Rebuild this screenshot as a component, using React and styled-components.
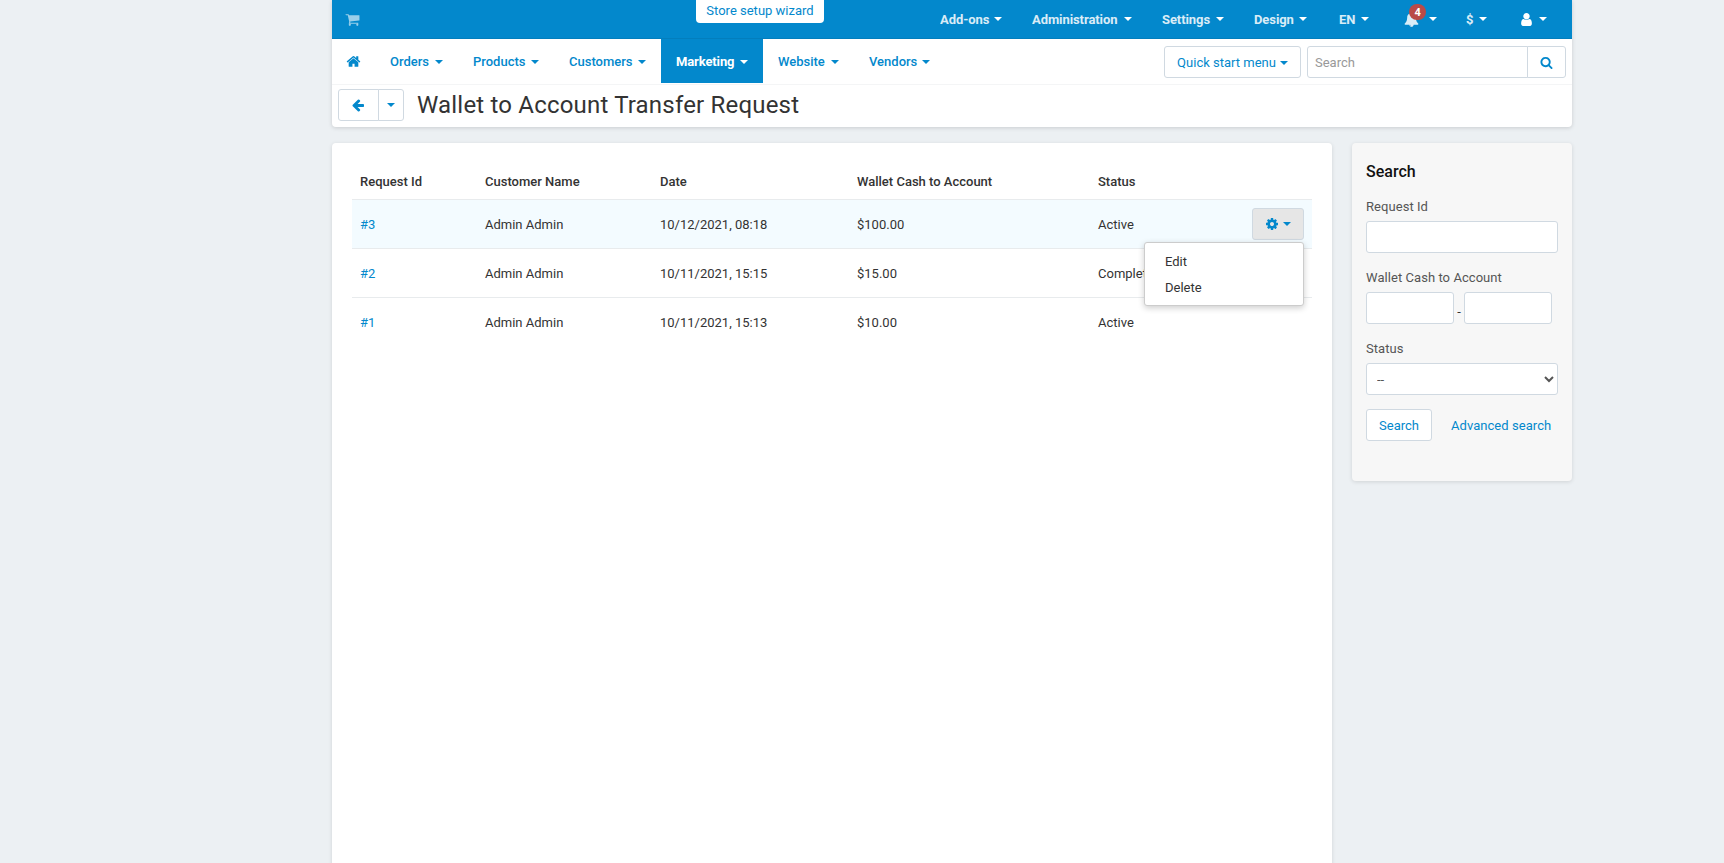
import * as React from "react"
import styled, { createGlobalStyle, css } from "styled-components"

const GlobalStyle = createGlobalStyle`
  * {
    box-sizing: border-box;
  }

  body {
    margin: 0;
    height: 863px;
    overflow: hidden;
    background: #ecf0f3;
    color: #333;
    font: 13px/20px Roboto, "Liberation Sans", sans-serif;
  }

  a {
    color: #0388cc;
    text-decoration: none;
  }
`

const blue = "#0388cc"
const border = "#d0d9e1"

const paths = {
  cart: "M704 1536q0 52-38 90t-90 38-90-38-38-90 38-90 90-38 90 38 38 90zm896 0q0 52-38 90t-90 38-90-38-38-90 38-90 90-38 90 38 38 90zm128-1088v512q0 24-16.5 42.5t-40.5 21.5l-1044 122q13 60 13 70 0 16-24 64h920q26 0 45 19t19 45-19 45-45 19h-1024q-26 0-45-19t-19-45q0-11 8-31.5t16-36 21.5-40 15.5-29.5l-177-823h-204q-26 0-45-19t-19-45 19-45 45-19h256q16 0 28.5 6.5t19.5 15.5 13 24.5 8 26 5.5 29.5 4.5 26h1201q26 0 45 19t19 45z",
  home: "M1472 992v480q0 26-19 45t-45 19h-384v-384h-256v384h-384q-26 0-45-19t-19-45v-480q0-1 .5-3t.5-3l575-474 575 474q1 2 1 6zm223-69l-62 74q-8 9-21 11h-3q-13 0-21-7l-692-577-692 577q-12 8-24 7-13-2-21-11l-62-74q-8-10-7-23.5t11-21.5l719-599q32-26 76-26t76 26l244 204v-195q0-14 9-23t23-9h192q14 0 23 9t9 23v408l219 182q10 8 11 21.5t-7 23.5z",
  back: "M1664 896v128q0 53-32.5 90.5t-84.5 37.5h-704l293 294q38 36 38 90t-38 90l-75 76q-37 37-90 37-52 0-91-37l-651-652q-37-37-37-90 0-52 37-91l651-650q38-38 91-38 52 0 90 38l75 74q38 38 38 91t-38 91l-293 293h704q52 0 84.5 37.5t32.5 90.5z",
  search: "M1216 832q0-185-131.5-316.5t-316.5-131.5-316.5 131.5-131.5 316.5 131.5 316.5 316.5 131.5 316.5-131.5 131.5-316.5zm512 832q0 52-38 90t-90 38q-54 0-90-38l-343-342q-179 124-399 124-143 0-273.5-55.5t-225-150-150-225-55.5-273.5 55.5-273.5 150-225 225-150 273.5-55.5 273.5 55.5 225 150 150 225 55.5 273.5q0 220-124 399l343 343q37 37 37 90z",
  user: "M1536 1399q0 109-62.5 187t-150.5 78h-854q-88 0-150.5-78t-62.5-187q0-85 8.5-160.5t31.5-152 58.5-131 94-89 134.5-34.5q131 128 313 128t313-128q76 0 134.5 34.5t94 89 58.5 131 31.5 152 8.5 160.5zm-256-887q0 159-112.5 271.5t-271.5 112.5-271.5-112.5-112.5-271.5 112.5-271.5 271.5-112.5 271.5 112.5 112.5 271.5z",
  bell: "M912 1696q0-16-16-16-59 0-101.5-42.5t-42.5-101.5q0-16-16-16t-16 16q0 73 51.5 124.5t124.5 51.5q16 0 16-16zm816-288q0 52-38 90t-90 38h-448q0 106-75 181t-181 75-181-75-75-181h-448q-52 0-90-38t-38-90q50-42 91-88t85-119.5 74.5-158.5 50-206 19.5-260q0-152 117-282.5t307-158.5q-8-19-8-39 0-40 28-68t68-28 68 28 28 68q0 20-8 39 190 28 307 158.5t117 282.5q0 139 19.5 260t50 206 74.5 158.5 85 119.5 91 88z",
  cog: "M1152 896q0-106-75-181t-181-75-181 75-75 181 75 181 181 75 181-75 75-181zm512-109v222q0 12-8 23t-20 13l-185 28q-19 54-39 91 35 50 107 138 10 12 10 25t-9 23q-27 37-99 108t-94 71q-12 0-26-9l-138-108q-44 23-91 38-16 136-29 186-7 28-36 28h-222q-14 0-24.5-8.5t-11.5-21.5l-28-184q-49-16-90-37l-141 107q-10 9-25 9-14 0-25-11-126-114-165-168-7-10-7-23 0-12 8-23 15-21 51-66.5t54-70.5q-27-50-41-99l-183-27q-13-2-21-12.5t-8-23.5v-222q0-12 8-23t19-13l186-28q14-46 39-92-40-57-107-138-10-12-10-24 0-10 9-23 26-36 98.5-107.5t94.5-71.5q13 0 26 10l138 107q44-23 91-38 16-136 29-186 7-28 36-28h222q14 0 24.5 8.5t11.5 21.5l28 184q49 16 90 37l142-107q9-9 24-9 13 0 25 10 129 119 165 170 7 8 7 22 0 12-8 23-15 21-51 66.5t-54 70.5q26 50 41 98l183 28q13 2 21 12.5t8 23.5z",
}

const Svg = styled.svg`
  display: block;
  flex: none;
  fill: currentColor;
`

const Icon = ({ name, size = 14, ...rest }) => (
  <Svg width={size} height={size} viewBox="0 0 1792 1792" {...rest}>
    <path d={paths[name]} />
  </Svg>
)

const Caret = styled.span`
  flex: none;
  border-top: 4px solid currentColor;
  border-left: 4px solid transparent;
  border-right: 4px solid transparent;
`

const Page = styled.div`
  width: 1240px;
  margin-left: 332px;
`

const HeaderWrapper = styled.header`
  height: 127px;
  background: #fff;
  border-radius: 0 0 4px 4px;
  box-shadow: 0 1px 4px rgba(0, 0, 0, 0.15);
`

const TopBar = styled.div`
  display: flex;
  align-items: center;
  height: 39px;
  padding: 0 10px 0 13px;
  background: ${blue};
  border-bottom: 1px solid #037ebd;
  color: #fff;
`

const CartIcon = styled(Icon)`
  opacity: 0.6;
`

const WizardLink = styled.a`
  align-self: flex-start;
  width: 128px;
  height: 23px;
  margin-left: 336px;
  background: #fff;
  border-radius: 0 0 4px 4px;
  line-height: 21px;
  text-align: center;
`

const TopMenu = styled.nav`
  display: flex;
  margin-left: auto;
`

const TopItem = styled.div`
  display: flex;
  align-items: center;
  justify-content: space-between;
  width: ${p => p.$width}px;
  margin-left: ${p => p.$gap || 0}px;
  padding: 0 15px;
  font-weight: 700;
  letter-spacing: -0.08px;

  > :first-child {
    margin-top: ${p => (p.$icon ? 0 : 2)}px;
    opacity: ${p => (p.$icon ? 1 : 0.85)};
  }
`

const BellWrapper = styled.span`
  position: relative;
`

const Badge = styled.span`
  position: absolute;
  top: -8px;
  left: 5px;
  width: 17px;
  height: 16px;
  background: #b94a48;
  border-radius: 8px;
  font-size: 11px;
  line-height: 17px;
  text-align: center;
`

const NavBar = styled.div`
  display: flex;
  height: 46px;
  padding-right: 6px;
  border-bottom: 1px solid #f4f5f6;
`

const HomeLink = styled.a`
  display: flex;
  width: 43px;
  padding: 15px 0 0 14px;
`

const NavItem = styled.a`
  display: flex;
  align-items: center;
  justify-content: space-between;
  width: ${p => p.$width}px;
  height: 44px;
  padding: 2px 15px 0;
  font-weight: 500;

  ${p => p.$active && css`
    background: ${blue};
    color: #fff;
    font-weight: 700;
    letter-spacing: -0.12px;
  `}
`

const NavTools = styled.div`
  display: flex;
  gap: 6px;
  margin: 7px 0 0 auto;
`

const Button = styled.a`
  display: flex;
  align-items: center;
  justify-content: center;
  gap: 4px;
  width: ${p => p.$width}px;
  height: 32px;
  background: ${p => (p.$pressed ? "#e6e6e6" : "#fff")};
  border: 1px solid ${border};
  border-radius: 3px;
  color: ${blue};
`

const TextButton = styled(Button)`
  padding-top: 2px;
`

const ButtonGroup = styled.div`
  display: flex;

  > * + * {
    margin-left: -1px;
    border-top-left-radius: 0;
    border-bottom-left-radius: 0;
  }

  > :first-child {
    border-top-right-radius: 0;
    border-bottom-right-radius: 0;
  }
`

const Input = styled.input`
  width: ${p => p.$width}px;
  height: 32px;
  padding: 5px 7px 4px;
  background: #fff;
  border: 1px solid ${border};
  border-radius: 3px;
  font: inherit;

  &::placeholder {
    color: #999;
  }
`

const TitleBar = styled.div`
  display: flex;
  align-items: center;
  height: 40px;
  padding-left: 6px;
`

const BackButton = styled(Button)`
  padding-right: 2px;
`

const Title = styled.h1`
  margin: 0 0 0 13px;
  font-size: 24px;
  font-weight: 400;
  line-height: 32px;
  letter-spacing: 0.19px;
`

const Columns = styled.div`
  display: flex;
  align-items: flex-start;
  gap: 20px;
  margin-top: 16px;
`

const Panel = styled.main`
  width: 1000px;
  height: 740px;
  padding: 20px;
  background: #fff;
  border-radius: 4px;
  box-shadow: 0 1px 4px rgba(0, 0, 0, 0.12);
`

const Row = styled.div`
  display: grid;
  grid-template-columns: 125px 175px 197px 241px 1fr auto;
  align-items: center;
  height: ${p => (p.$head ? 37 : 49)}px;
  padding: 0 8px;
  background: ${p => (p.$hover ? "#f3fbff" : "transparent")};
  border-bottom: 1px solid ${p => (p.$last ? "transparent" : "#e8ebed")};
  font-weight: ${p => (p.$head ? 500 : 400)};
`

const Cell = styled.span`
  padding-top: 2px;
`

const Tools = styled.div`
  position: relative;
`

const Menu = styled.div`
  position: absolute;
  top: 34px;
  right: 0;
  width: 160px;
  height: 64px;
  padding: 6px 0;
  background: #fff;
  border: 1px solid #ccc;
  border-radius: 3px;
  box-shadow: 0 2px 6px rgba(0, 0, 0, 0.2);
`

const MenuItem = styled.a`
  display: block;
  padding: 3px 20px;
  color: #333;
`

const Sidebar = styled.aside`
  width: 220px;
  height: 338px;
  padding: 19px 14px;
  background: #f7f7f7;
  border-radius: 4px;
  box-shadow: 0 1px 4px rgba(0, 0, 0, 0.12);
`

const SidebarTitle = styled.h2`
  margin: 0 0 14px;
  color: #111;
  font-size: 16px;
  font-weight: 500;
  line-height: 20px;
`

const Field = styled.div`
  margin-bottom: 14px;
`

const Label = styled.label`
  display: block;
  height: 25px;
  line-height: 21px;
  letter-spacing: 0.06px;
  color: #555;
`

const Range = styled.div`
  display: flex;
  align-items: center;
  height: 32px;

  span {
    width: 10px;
    padding-top: 7px;
    text-align: center;
  }
`

const Select = styled.select`
  display: block;
  width: 192px;
  height: 32px;
  padding: 4px 6px;
  background: #fff;
  border: 1px solid ${border};
  border-radius: 3px;
  color: #555;
  font: inherit;
`

const Actions = styled.div`
  display: flex;
  align-items: center;
  gap: 19px;
`

const AdvancedLink = styled.a`
  padding-top: 2px;
  letter-spacing: 0.05px;
`

const requests = [
  { id: 3, date: "10/12/2021, 08:18", cash: "$100.00", status: "Active" },
  { id: 2, date: "10/11/2021, 15:15", cash: "$15.00", status: "Completed" },
  { id: 1, date: "10/11/2021, 15:13", cash: "$10.00", status: "Active" },
]

const Header = () => (
  <HeaderWrapper>
    <TopBar>
      <CartIcon name="cart" size={15} />
      <WizardLink href="#">Store setup wizard</WizardLink>
      <TopMenu>
        <TopItem $width={92}><span>Add-ons</span><Caret /></TopItem>
        <TopItem $width={130}><span>Administration</span><Caret /></TopItem>
        <TopItem $width={92}><span>Settings</span><Caret /></TopItem>
        <TopItem $width={83}><span>Design</span><Caret /></TopItem>
        <TopItem $width={60} $gap={2}><span>EN</span><Caret /></TopItem>
        <TopItem $width={63} $gap={5} $icon>
          <BellWrapper>
            <Icon name="bell" size={15} opacity={0.85} />
            <Badge>4</Badge>
          </BellWrapper>
          <Caret />
        </TopItem>
        <TopItem $width={51} $gap={-1}><span>$</span><Caret /></TopItem>
        <TopItem $width={58} $gap={2} $icon><Icon name="user" size={15} /><Caret /></TopItem>
      </TopMenu>
    </TopBar>
    <NavBar>
      <HomeLink href="#"><Icon name="home" size={15} /></HomeLink>
      <NavItem href="#" $width={83}>Orders<Caret /></NavItem>
      <NavItem href="#" $width={96}>Products<Caret /></NavItem>
      <NavItem href="#" $width={107}>Customers<Caret /></NavItem>
      <NavItem href="#" $width={102} $active>Marketing<Caret /></NavItem>
      <NavItem href="#" $width={91}>Website<Caret /></NavItem>
      <NavItem href="#" $width={91}>Vendors<Caret /></NavItem>
      <NavTools>
        <TextButton href="#" $width={137}>Quick start menu<Caret /></TextButton>
        <ButtonGroup>
          <Input $width={221} placeholder="Search" />
          <Button href="#" $width={39}><Icon name="search" size={13} /></Button>
        </ButtonGroup>
      </NavTools>
    </NavBar>
    <TitleBar>
      <ButtonGroup>
        <BackButton href="#" $width={41}><Icon name="back" /></BackButton>
        <Button href="#" $width={26}><Caret /></Button>
      </ButtonGroup>
      <Title>Wallet to Account Transfer Request</Title>
    </TitleBar>
  </HeaderWrapper>
)

const RowTools = () => (
  <Tools>
    <Button href="#" $width={52} $pressed><Icon name="cog" /><Caret /></Button>
    <Menu>
      <MenuItem href="#">Edit</MenuItem>
      <MenuItem href="#">Delete</MenuItem>
    </Menu>
  </Tools>
)

const RequestTable = () => (
  <div>
    <Row $head>
      <Cell>Request Id</Cell>
      <Cell>Customer Name</Cell>
      <Cell>Date</Cell>
      <Cell>Wallet Cash to Account</Cell>
      <Cell>Status</Cell>
    </Row>
    {requests.map((r, i) => (
      <Row key={r.id} $hover={i === 0} $last={i === requests.length - 1}>
        <Cell><a href="#">#{r.id}</a></Cell>
        <Cell>Admin Admin</Cell>
        <Cell>{r.date}</Cell>
        <Cell>{r.cash}</Cell>
        <Cell>{r.status}</Cell>
        {i === 0 && <RowTools />}
      </Row>
    ))}
  </div>
)

const SearchForm = () => (
  <Sidebar>
    <SidebarTitle>Search</SidebarTitle>
    <Field>
      <Label>Request Id</Label>
      <Input $width={192} />
    </Field>
    <Field>
      <Label>Wallet Cash to Account</Label>
      <Range>
        <Input $width={88} />
        <span>-</span>
        <Input $width={88} />
      </Range>
    </Field>
    <Field>
      <Label>Status</Label>
      <Select>
        <option>--</option>
      </Select>
    </Field>
    <Actions>
      <TextButton href="#" $width={66}>Search</TextButton>
      <AdvancedLink href="#">Advanced search</AdvancedLink>
    </Actions>
  </Sidebar>
)

const App = () => (
  <>
    <GlobalStyle />
    <Page>
      <Header />
      <Columns>
        <Panel>
          <RequestTable />
        </Panel>
        <SearchForm />
      </Columns>
    </Page>
  </>
)

export default App
